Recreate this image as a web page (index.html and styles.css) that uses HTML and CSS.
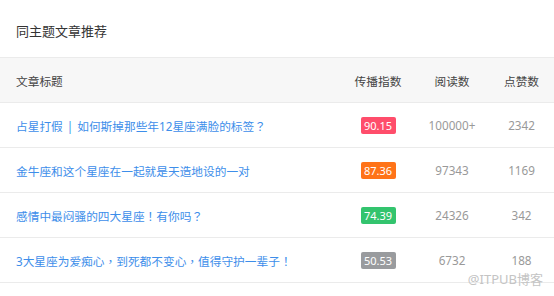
FILE: index.html
```html
<!DOCTYPE html>
<html lang="zh-CN">
<head>
<meta charset="utf-8">
<title>同主题文章推荐</title>
<link rel="stylesheet" href="styles.css">
</head>
<body>
<div class="panel">
  <h2 class="panel-title">同主题文章推荐</h2>
  <div class="table">
    <div class="row head">
      <div class="cell title">文章标题</div>
      <div class="cell num">传播指数</div>
      <div class="cell num">阅读数</div>
      <div class="cell num">点赞数</div>
    </div>
    <div class="row">
      <div class="cell title"><a href="#">占星打假<span class="sep">|</span>如何斯掉那些年12星座满脸的标签<span class="punct" lang="zh-TW">？</span></a></div>
      <div class="cell num"><span class="badge red">90.15</span></div>
      <div class="cell num">100000+</div>
      <div class="cell num">2342</div>
    </div>
    <div class="row">
      <div class="cell title"><a href="#">金牛座和这个星座在一起就是天造地设的一对</a></div>
      <div class="cell num"><span class="badge orange">87.36</span></div>
      <div class="cell num">97343</div>
      <div class="cell num">1169</div>
    </div>
    <div class="row">
      <div class="cell title"><a href="#">感情中最闷骚的四大星座<span class="punct" lang="zh-TW">！</span>有你吗<span class="punct" lang="zh-TW">？</span></a></div>
      <div class="cell num"><span class="badge green">74.39</span></div>
      <div class="cell num">24326</div>
      <div class="cell num">342</div>
    </div>
    <div class="row">
      <div class="cell title"><a href="#">3大星座为爱痴心<span class="punct" lang="zh-TW">，</span>到死都不变心<span class="punct" lang="zh-TW">，</span>值得守护一辈子<span class="punct" lang="zh-TW">！</span></a></div>
      <div class="cell num"><span class="badge gray">50.53</span></div>
      <div class="cell num">6732</div>
      <div class="cell num">188</div>
    </div>
  </div>
</div>
<div class="watermark">@ITPUB博客</div>
</body>
</html>
```

FILE: styles.css
```css
html, body {
  margin: 0;
  padding: 0;
  background: #ffffff;
}
body {
  font-family: "Noto Sans", "Noto Sans CJK SC", sans-serif;
  color: #333333;
  width: 554px;
  height: 296px;
  overflow: hidden;
  position: relative;
}
.panel-title {
  margin: 0;
  height: 57px;
  padding-left: 16px;
  font-size: 13px;
  font-weight: normal;
  line-height: 62px;
  color: #333333;
  box-sizing: border-box;
}
.table {
  display: flex;
  flex-direction: column;
}
.row {
  display: grid;
  grid-template-columns: 1fr 74px 74px 65px;
  align-items: center;
  height: 44px;
  border-bottom: 1px solid #ebebeb;
  font-size: 11.7px;
}
.row.head {
  background: #f7f7f7;
  border-top: 1px solid #ebebeb;
  color: #444444;
}
.cell.title {
  padding-left: 16px;
  white-space: nowrap;
}
.cell.num {
  text-align: center;
  color: #999999;
}
.row.head .cell.num {
  color: #444444;
}
.cell a {
  color: #3d8eea;
  text-decoration: none;
}
.sep {
  display: inline-block;
  padding: 0 4px;
}
.punct {
  font-family: "Noto Sans CJK TC", sans-serif;
}
.badge {
  display: inline-block;
  width: 35px;
  height: 17px;
  line-height: 17px;
  border-radius: 2px;
  color: #ffffff;
  font-size: 11px;
  text-align: center;
}
.badge.red { background: #ff4d6b; }
.badge.orange { background: #ff7318; }
.badge.green { background: #33c46e; }
.badge.gray { background: #999b9e; }
.watermark {
  position: absolute;
  right: 11px;
  bottom: 10px;
  font-size: 13px;
  color: #c4c4c4;
  line-height: 13px;
}
```
